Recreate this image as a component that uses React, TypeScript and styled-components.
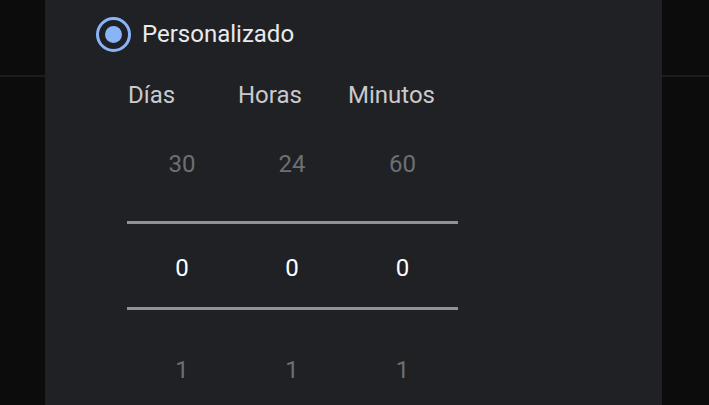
import styled, { createGlobalStyle } from 'styled-components';

const GlobalStyle = createGlobalStyle`
  html, body {
    margin: 0;
    padding: 0;
    background: #0c0c0c;
    overflow: hidden;
  }
  * {
    box-sizing: border-box;
  }
`;

const Screen = styled.div`
  position: relative;
  width: 709px;
  height: 405px;
  background: #0c0c0c;
  font-family: Roboto, 'Noto Sans', sans-serif;
  overflow: hidden;
`;

const AppBar = styled.div`
  height: 77px;
  border-bottom: 2px solid #1c1c1d;
`;

const Dialog = styled.div`
  position: absolute;
  top: 0;
  bottom: 0;
  left: 45px;
  width: 617px;
  background: #202124;
  padding: 17px 0 0 51px;
  display: flex;
  flex-direction: column;
`;

const OptionRow = styled.label`
  display: flex;
  align-items: center;
  gap: 11px;
  height: 34px;
`;

const Radio = styled.span<{ checked?: boolean }>`
  width: 35px;
  height: 35px;
  border-radius: 50%;
  border: 3.5px solid #8ab4f8;
  display: flex;
  align-items: center;
  justify-content: center;

  &::after {
    content: '';
    width: 17px;
    height: 17px;
    border-radius: 50%;
    background: ${(p) => (p.checked ? '#8ab4f8' : 'transparent')};
  }
`;

const OptionLabel = styled.span`
  font-size: 24px;
  line-height: 28px;
  color: #e8eaed;
`;

const Picker = styled.div`
  margin: 30px 0 0 31px;
  width: 331px;
  display: flex;
  flex-direction: column;
`;

const Columns = styled.div`
  display: grid;
  grid-template-columns: 110px 110px 111px;
`;

const Header = styled.span`
  font-size: 24px;
  line-height: 28px;
  color: #c8cacd;
  padding-left: 1px;
`;

const ValueRow = styled(Columns)<{ offset: number }>`
  margin-top: ${(p) => p.offset}px;
  height: 103px;
  align-items: center;
`;

const SelectedRow = styled(Columns)`
  margin-top: 6px;
  border-top: 3px solid #8f9297;
  border-bottom: 3px solid #8f9297;
  height: 89px;
  padding-top: 4px;
  align-items: center;
`;

const Value = styled.span<{ selected?: boolean }>`
  text-align: center;
  font-size: 24px;
  line-height: 28px;
  color: ${(p) => (p.selected ? '#ffffff' : '#6c6f73')};
`;

const units = ['Días', 'Horas', 'Minutos'];
const previous = ['30', '24', '60'];
const current = ['0', '0', '0'];
const next = ['1', '1', '1'];

export default function App() {
  return (
    <>
      <GlobalStyle />
      <Screen>
        <AppBar />
        <Dialog>
          <OptionRow>
            <Radio checked />
            <OptionLabel>Personalizado</OptionLabel>
          </OptionRow>

          <Picker>
            <Columns>
              {units.map((u) => (
                <Header key={u}>{u}</Header>
              ))}
            </Columns>

            <ValueRow offset={3}>
              {previous.map((v, i) => (
                <Value key={i}>{v}</Value>
              ))}
            </ValueRow>

            <SelectedRow>
              {current.map((v, i) => (
                <Value key={i} selected>
                  {v}
                </Value>
              ))}
            </SelectedRow>

            <ValueRow offset={8}>
              {next.map((v, i) => (
                <Value key={i}>{v}</Value>
              ))}
            </ValueRow>
          </Picker>
        </Dialog>
      </Screen>
    </>
  );
}
